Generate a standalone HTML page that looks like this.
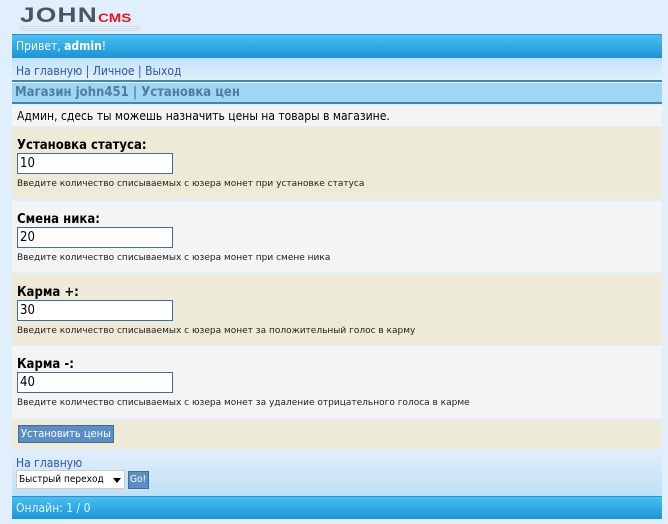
<!DOCTYPE html>
<html><head><meta charset="utf-8"><style>
*{margin:0;padding:0;box-sizing:border-box}
body{width:668px;height:524px;background:#e1eefc;font-family:"DejaVu Sans Condensed","DejaVu Sans","Liberation Sans",sans-serif;position:relative;overflow:hidden}
.a{position:absolute;white-space:nowrap}
.logo{left:20px;top:6px;font-family:"Liberation Sans",sans-serif;font-weight:bold;font-size:21px;color:#4a5560;line-height:20px;transform:scaleX(1.25);transform-origin:0 0;letter-spacing:1px}
.logo span{color:#e8141c;font-size:12px;letter-spacing:0}
.logo2{left:20px;top:26px;width:120px;height:6px;background:repeating-linear-gradient(#d6dce3 0 1px,transparent 1px 2px)}
.hdr{left:12px;top:34px;width:650px;height:24px;background:linear-gradient(#48c0f0,#1a94d8);border-top:1px solid #2a8ed8;color:#fff;font-size:12px;padding:4px 4px}
.nav{left:12px;top:58px;width:650px;height:24px;background:linear-gradient(#c2e2f8,#e2f0fc);border-bottom:2px solid #3d87b8;font-size:12px;color:#2e58a8;padding:6px 4px}
.ttl{left:12px;top:83px;width:650px;height:21px;background:#9fd6f3;border-bottom:2px solid #3d87b8;font-size:13px;font-weight:bold;color:#4a7fa2;padding:2px 3px}
.menu{left:12px;top:105px;width:650px;height:21px;background:#f4f4f4;font-size:12px;color:#000;padding:4px 5px}
.sec{left:12px;width:650px;font-size:12px}
.b{background:#eeead8}.g{background:#f4f4f4}
.sec b{position:absolute;left:5px;top:11px;font-size:13px}
.sec .in{position:absolute;left:5px;top:26px;width:156px;height:21px;border:1px solid #3d6e9d;background:#fff;font-size:13px;padding:2px 2px;line-height:15px}
.sec small{position:absolute;left:5px;top:52px;font-size:9px;color:#222;font-family:"DejaVu Sans",sans-serif}
.btn{left:18px;top:425px;width:96px;height:18px;background:#5a8ec4;border:1px solid #3f6c9a;color:#fff;font-size:11px;padding:2px 2px;line-height:12px}
.foot{left:12px;top:450px;width:650px;height:46px;background:linear-gradient(#e1eefc,#c0e0f6)}
.hl{left:16px;top:456px;font-size:12px;color:#2e58a8}
.sel{left:16px;top:470px;width:109px;height:19px;background:#fff;border:1px solid #ccc;font-size:10px;padding:3px 2px;line-height:12px}
.go{left:128px;top:471px;width:21px;height:18px;background:#5a8ec4;border:1px solid #3f6c9a;color:#fff;font-size:10px;padding:2px 1px;line-height:12px}
.on{left:12px;top:496px;width:650px;height:23px;background:linear-gradient(#48c0f0,#1a94d8);border-top:1px solid #2a8ed8;color:#e6f4ff;font-size:12px;padding:4px 4px}
</style></head><body>
<div class="a logo">JOHN<span>CMS</span></div>
<div class="a logo2"></div>
<div class="a hdr">Привет, <b>admin</b>!</div>
<div class="a nav">На главную | Личное | Выход</div>
<div class="a ttl">Магазин john451 | Установка цен</div>
<div class="a menu">Админ, сдесь ты можешь назначить цены на товары в магазине.</div>
<div class="a sec b" style="top:127px;height:72px"><b>Установка статуса:</b><div class="in">10</div><small>Введите количество списываемых с юзера монет при установке статуса</small></div>
<div class="a sec g" style="top:201px;height:71px"><b>Смена ника:</b><div class="in">20</div><small>Введите количество списываемых с юзера монет при смене ника</small></div>
<div class="a sec b" style="top:274px;height:71px"><b>Карма +:</b><div class="in">30</div><small>Введите количество списываемых с юзера монет за положительный голос в карму</small></div>
<div class="a sec g" style="top:346px;height:72px"><b>Карма -:</b><div class="in">40</div><small>Введите количество списываемых с юзера монет за удаление отрицательного голоса в карме</small></div>
<div class="a sec b" style="top:420px;height:29px"></div>
<div class="a btn">Установить цены</div>
<div class="a foot"></div>
<div class="a hl">На главную</div>
<div class="a sel">Быстрый переход<svg style="position:absolute;right:3px;top:7px" width="8" height="5"><path d="M0 0H8L4 5Z" fill="#000"/></svg></div>
<div class="a go">Go!</div>
<div class="a on">Онлайн: 1 / 0</div>
</body></html>
